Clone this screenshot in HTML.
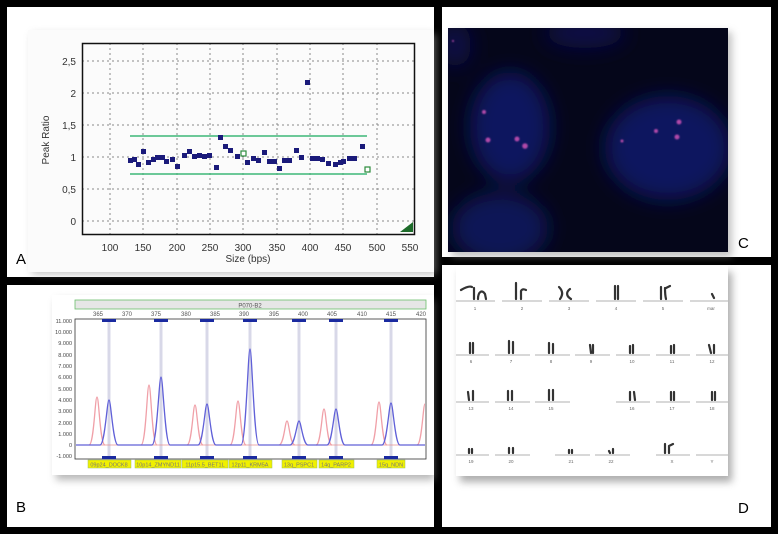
<!DOCTYPE html>
<html><head><meta charset="utf-8"><style>
html,body{margin:0;padding:0;background:#000;}
svg{display:block;font-family:"Liberation Sans",sans-serif;}
</style></head><body>
<svg width="778" height="534" viewBox="0 0 778 534" xmlns="http://www.w3.org/2000/svg">
<defs>
<filter id="bl" x="-50%" y="-50%" width="200%" height="200%"><feGaussianBlur stdDeviation="10"/></filter>
<filter id="sh" x="-10%" y="-10%" width="130%" height="130%"><feGaussianBlur stdDeviation="4"/></filter>
<filter id="b1"><feGaussianBlur stdDeviation="0.8"/></filter>
</defs>
<rect width="778" height="534" fill="#000"/>
<rect x="7" y="7" width="427" height="270" fill="#fff"/>
<rect x="7" y="285" width="427" height="242" fill="#fff"/>
<rect x="442" y="7" width="329" height="250" fill="#fff"/>
<rect x="442" y="265" width="329" height="262" fill="#fff"/>

<!-- Panel A -->
<rect x="32" y="34" width="404" height="240" fill="#999" filter="url(#sh)" opacity="0.6"/>
<rect x="28" y="30" width="406" height="242" fill="#fbfbfb"/>
<g stroke="#888" stroke-width="1" stroke-dasharray="2,3">
<line x1="82" y1="61" x2="415" y2="61"/><line x1="82" y1="93" x2="415" y2="93"/><line x1="82" y1="125" x2="415" y2="125"/><line x1="82" y1="157" x2="415" y2="157"/><line x1="82" y1="189" x2="415" y2="189"/><line x1="82" y1="221" x2="415" y2="221"/>
<line x1="110" y1="43" x2="110" y2="235"/><line x1="143" y1="43" x2="143" y2="235"/><line x1="177" y1="43" x2="177" y2="235"/><line x1="210" y1="43" x2="210" y2="235"/><line x1="243" y1="43" x2="243" y2="235"/><line x1="277" y1="43" x2="277" y2="235"/><line x1="310" y1="43" x2="310" y2="235"/><line x1="343" y1="43" x2="343" y2="235"/><line x1="377" y1="43" x2="377" y2="235"/>
</g>
<rect x="82.5" y="43.5" width="332" height="191" fill="none" stroke="#111" stroke-width="1.5"/>
<line x1="130" y1="136" x2="367" y2="136" stroke="#3cb878" stroke-width="1.5"/>
<line x1="130" y1="174" x2="367" y2="174" stroke="#3cb878" stroke-width="1.5"/>
<g fill="#1a1a7a">
<rect x="128" y="158" width="5" height="5"/><rect x="132" y="157" width="5" height="5"/><rect x="136" y="162" width="5" height="5"/><rect x="141" y="149" width="5" height="5"/><rect x="146" y="160" width="5" height="5"/><rect x="151" y="157" width="5" height="5"/><rect x="155" y="155" width="5" height="5"/><rect x="160" y="155" width="5" height="5"/><rect x="164" y="159" width="5" height="5"/><rect x="170" y="157" width="5" height="5"/><rect x="175" y="164" width="5" height="5"/><rect x="182" y="153" width="5" height="5"/><rect x="187" y="149" width="5" height="5"/><rect x="192" y="154" width="5" height="5"/><rect x="197" y="153" width="5" height="5"/><rect x="202" y="154" width="5" height="5"/><rect x="207" y="153" width="5" height="5"/><rect x="214" y="165" width="5" height="5"/><rect x="218" y="135" width="5" height="5"/><rect x="223" y="144" width="5" height="5"/><rect x="228" y="148" width="5" height="5"/><rect x="235" y="154" width="5" height="5"/><rect x="245" y="160" width="5" height="5"/><rect x="251" y="156" width="5" height="5"/><rect x="256" y="158" width="5" height="5"/><rect x="262" y="150" width="5" height="5"/><rect x="267" y="159" width="5" height="5"/><rect x="272" y="159" width="5" height="5"/><rect x="277" y="166" width="5" height="5"/><rect x="282" y="158" width="5" height="5"/><rect x="287" y="158" width="5" height="5"/><rect x="294" y="148" width="5" height="5"/><rect x="299" y="155" width="5" height="5"/><rect x="305" y="80" width="5" height="5"/><rect x="310" y="156" width="5" height="5"/><rect x="315" y="156" width="5" height="5"/><rect x="320" y="157" width="5" height="5"/><rect x="326" y="161" width="5" height="5"/><rect x="333" y="162" width="5" height="5"/><rect x="338" y="160" width="5" height="5"/><rect x="341" y="159" width="5" height="5"/><rect x="347" y="156" width="5" height="5"/><rect x="352" y="156" width="5" height="5"/><rect x="360" y="144" width="5" height="5"/>
</g>
<rect x="241" y="151" width="5" height="5" fill="#fff" stroke="#2a8a3a" stroke-width="1.2"/>
<rect x="365" y="167" width="5" height="5" fill="#fff" stroke="#2a8a3a" stroke-width="1.2"/>
<polygon points="400,232 413,232 413,222" fill="#1d6b2a"/>
<g font-size="10" fill="#333" text-anchor="end">
<text x="76" y="65">2,5</text><text x="76" y="97">2</text><text x="76" y="129">1,5</text><text x="76" y="161">1</text><text x="76" y="193">0,5</text><text x="76" y="225">0</text>
</g>
<g font-size="10" fill="#333" text-anchor="middle">
<text x="110" y="251">100</text><text x="143" y="251">150</text><text x="177" y="251">200</text><text x="210" y="251">250</text><text x="243" y="251">300</text><text x="277" y="251">350</text><text x="310" y="251">400</text><text x="343" y="251">450</text><text x="377" y="251">500</text><text x="410" y="251">550</text>
<text x="248" y="262">Size (bps)</text>
</g>
<text x="49" y="140" font-size="10" fill="#333" text-anchor="middle" transform="rotate(-90 49 140)">Peak Ratio</text>
<text x="16" y="264" font-size="15" fill="#000">A</text>

<!-- Panel B -->
<rect x="56" y="300" width="378" height="180" fill="#888" filter="url(#sh)" opacity="0.6"/>
<rect x="52" y="295" width="382" height="180" fill="#fff"/>
<rect x="75" y="300" width="351" height="9" fill="#e6e6e6" stroke="#6bbf6b" stroke-width="0.8"/>
<text x="250" y="307.5" font-size="6" fill="#555" text-anchor="middle">P070-B2</text>
<g font-size="6" fill="#555" text-anchor="middle">
<text x="98" y="316">365</text><text x="127" y="316">370</text><text x="156" y="316">375</text><text x="186" y="316">380</text><text x="215" y="316">385</text><text x="244" y="316">390</text><text x="274" y="316">395</text><text x="303" y="316">400</text><text x="332" y="316">405</text><text x="362" y="316">410</text><text x="391" y="316">415</text><text x="421" y="316">420</text>
</g>
<rect x="75" y="319" width="351" height="140" fill="#fff" stroke="#333" stroke-width="0.8"/>
<g font-size="5.5" fill="#444" text-anchor="end">
<text x="72" y="323">11.000</text><text x="72" y="334">10.000</text><text x="72" y="345">9.000</text><text x="72" y="357">8.000</text><text x="72" y="368">7.000</text><text x="72" y="379">6.000</text><text x="72" y="391">5.000</text><text x="72" y="402">4.000</text><text x="72" y="413">3.000</text><text x="72" y="425">2.000</text><text x="72" y="436">1.000</text><text x="72" y="447">0</text><text x="72" y="458">-1.000</text>
</g>
<g stroke="#d8d8e8" stroke-width="3">
<line x1="109" y1="320" x2="109" y2="458"/><line x1="161" y1="320" x2="161" y2="458"/><line x1="207" y1="320" x2="207" y2="458"/><line x1="250" y1="320" x2="250" y2="458"/><line x1="299" y1="320" x2="299" y2="458"/><line x1="336" y1="320" x2="336" y2="458"/><line x1="391" y1="320" x2="391" y2="458"/>
</g>
<line x1="76" y1="445" x2="425" y2="445" stroke="#e89090" stroke-width="0.7"/>
<g fill="none" stroke="#f0a0a8" stroke-width="1.3">
<path d="M89,445 C94,445 95,397 97,397 C99,397 100,445 105,445"/>
<path d="M141,445 C146,445 147,385 149,385 C151,385 152,445 157,445"/>
<path d="M187,445 C192,445 193,405 195,405 C197,405 198,445 203,445"/>
<path d="M230,445 C235,445 236,401 238,401 C240,401 241,445 246,445"/>
<path d="M279,445 C284,445 285,421 287,421 C289,421 290,445 295,445"/>
<path d="M316,445 C321,445 322,409 324,409 C326,409 327,445 332,445"/>
<path d="M371,445 C376,445 377,402 379,402 C381,402 382,445 387,445"/>
<path d="M417,445 C422,445 423,404 425,404"/>
</g>
<g fill="none" stroke="#6060d8" stroke-width="1.3">
<path d="M76,445 L100,445 C105,445 107,400 109,400 C111,400 113,445 118,445 L152,445 C157,445 159,377 161,377 C163,377 165,445 170,445 L198,445 C203,445 205,404 207,404 C209,404 211,445 216,445 L241,445 C246,445 248,349 250,349 C252,349 254,445 259,445 L290,445 C295,445 297,421 299,421 C301,421 303,445 308,445 L327,445 C332,445 334,409 336,409 C338,409 340,445 345,445 L382,445 C387,445 389,403 391,403 C393,403 395,445 400,445 L425,445"/>
</g>
<g fill="#1a2aa0">
<rect x="102" y="319" width="14" height="3"/><rect x="154" y="319" width="14" height="3"/><rect x="200" y="319" width="14" height="3"/><rect x="243" y="319" width="14" height="3"/><rect x="292" y="319" width="14" height="3"/><rect x="329" y="319" width="14" height="3"/><rect x="384" y="319" width="14" height="3"/>
<rect x="102" y="456" width="14" height="3"/><rect x="154" y="456" width="14" height="3"/><rect x="200" y="456" width="14" height="3"/><rect x="243" y="456" width="14" height="3"/><rect x="292" y="456" width="14" height="3"/><rect x="329" y="456" width="14" height="3"/><rect x="384" y="456" width="14" height="3"/>
</g>
<g fill="#f0f000" stroke="#9ac060" stroke-width="0.5">
<rect x="88" y="460" width="43" height="8"/><rect x="135" y="460" width="46" height="8"/><rect x="182" y="460" width="46" height="8"/><rect x="229" y="460" width="43" height="8"/><rect x="282" y="460" width="35" height="8"/><rect x="319" y="460" width="35" height="8"/><rect x="377" y="460" width="28" height="8"/>
</g>
<g font-size="5.5" fill="#777" text-anchor="middle">
<text x="109" y="466.5">09p24_DOCK8</text><text x="158" y="466.5">10p14_ZMYND11</text><text x="205" y="466.5">11p15.5_BET1L</text><text x="250" y="466.5">12p11_KRM5A</text><text x="299" y="466.5">13q_PSPC1</text><text x="336" y="466.5">14q_PARP2</text><text x="391" y="466.5">15q_NDN</text>
</g>
<text x="16" y="512" font-size="15" fill="#000">B</text>

<!-- Panel C -->
<rect x="452" y="32" width="280" height="225" fill="#888" filter="url(#sh)" opacity="0.5"/>
<svg x="448" y="28" width="280" height="224" viewBox="448 28 280 224">
<rect x="448" y="28" width="280" height="224" fill="#05061a"/>
<g filter="url(#bl)">
<ellipse cx="510" cy="127" rx="40" ry="55" fill="#10155e"/>
<ellipse cx="668" cy="148" rx="63" ry="52" fill="#10155e"/>
<ellipse cx="500" cy="228" rx="48" ry="35" fill="#0e1356"/>
<ellipse cx="585" cy="33" rx="40" ry="15" fill="#0c1046"/>
<ellipse cx="455" cy="45" rx="16" ry="22" fill="#0c1046"/>
</g>
<g fill="#b048a8" filter="url(#b1)">
<circle cx="484" cy="112" r="2"/><circle cx="488" cy="140" r="2.5"/><circle cx="517" cy="139" r="2.5"/><circle cx="525" cy="146" r="2.8"/><circle cx="656" cy="131" r="2"/><circle cx="679" cy="122" r="2.5"/><circle cx="677" cy="137" r="2.5"/><circle cx="622" cy="141" r="1.5"/><circle cx="453" cy="41" r="1"/>
</g>
</svg>
<text x="738" y="248" font-size="15" fill="#000">C</text>

<!-- Panel D -->
<rect x="460" y="272" width="272" height="210" fill="#777" filter="url(#sh)" opacity="0.6"/>
<rect x="456" y="266" width="272" height="210" fill="#fff"/>
<g stroke="#999" stroke-width="0.7">
<line x1="456" y1="301" x2="495" y2="301"/><line x1="502" y1="301" x2="542" y2="301"/><line x1="549" y1="301" x2="589" y2="301"/><line x1="596" y1="301" x2="636" y2="301"/><line x1="643" y1="301" x2="683" y2="301"/><line x1="690" y1="301" x2="728" y2="301"/>
<line x1="456" y1="355" x2="489" y2="355"/><line x1="495" y1="355" x2="530" y2="355"/><line x1="535" y1="355" x2="570" y2="355"/><line x1="575" y1="355" x2="610" y2="355"/><line x1="616" y1="355" x2="650" y2="355"/><line x1="656" y1="355" x2="690" y2="355"/><line x1="696" y1="355" x2="728" y2="355"/>
<line x1="456" y1="402" x2="489" y2="402"/><line x1="495" y1="402" x2="530" y2="402"/><line x1="535" y1="402" x2="570" y2="402"/><line x1="616" y1="402" x2="650" y2="402"/><line x1="656" y1="402" x2="690" y2="402"/><line x1="696" y1="402" x2="728" y2="402"/>
<line x1="456" y1="455" x2="489" y2="455"/><line x1="495" y1="455" x2="530" y2="455"/><line x1="555" y1="455" x2="590" y2="455"/><line x1="595" y1="455" x2="630" y2="455"/><line x1="656" y1="455" x2="690" y2="455"/><line x1="696" y1="455" x2="728" y2="455"/>
</g>
<g fill="none" stroke="#333" stroke-width="2.2" stroke-linecap="round">
<path d="M461,290 C466,287 470,286 472,287 M474,299 L474,288 M478,299 C478,292 482,289 485,294 L486,299"/>
<path d="M516,299 L516,283 M521,299 L521,291 C522,289 524,289 526,290"/>
<path d="M559,287 C563,291 563,295 560,299 M570,289 C566,292 566,296 571,299"/>
<path d="M615,286 L615,299 M618,286 L618,299"/>
<path d="M661,287 L661,299 M665,288 C665,292 665,295 666,299 M666,288 L670,286"/>
<path d="M712,294 L714,298 M470,343 L470,353 M473,343 L473,353 M509,341 L509,353 M513,342 L513,353 M549,343 L549,353 M553,344 L553,353 M590,345 L591,353 M593,345 L593,353 M630,346 L630,353 M633,345 L633,353 M671,346 L671,353 M674,345 L674,353 M709,345 L711,353 M714,345 L714,353"/>
<path d="M468,392 L469,400 M473,391 L473,400 M508,391 L508,400 M512,391 L512,400 M549,390 L549,400 M553,390 L553,400 M630,392 L630,400 M634,392 L635,400 M671,392 L671,400 M674,392 L674,400 M712,392 L712,400 M715,392 L715,400"/>
<path d="M469,449 L469,453 M472,449 L472,453 M509,448 L509,453 M513,448 L513,453 M569,450 L569,453 M572,450 L572,453 M609,451 L610,453 M613,449 L613,453 M665,444 L665,453 M669,446 L669,453 M669,446 L673,444"/>
</g>
<g font-size="4.5" fill="#666" text-anchor="middle">
<text x="475" y="310">1</text><text x="522" y="310">2</text><text x="569" y="310">3</text><text x="616" y="310">4</text><text x="663" y="310">5</text><text x="711" y="310">mar</text>
<text x="471" y="363">6</text><text x="511" y="363">7</text><text x="551" y="363">8</text><text x="591" y="363">9</text><text x="632" y="363">10</text><text x="672" y="363">11</text><text x="712" y="363">12</text>
<text x="471" y="410">13</text><text x="511" y="410">14</text><text x="551" y="410">15</text><text x="632" y="410">16</text><text x="672" y="410">17</text><text x="712" y="410">18</text>
<text x="471" y="463">19</text><text x="511" y="463">20</text><text x="571" y="463">21</text><text x="611" y="463">22</text><text x="672" y="463">X</text><text x="712" y="463">Y</text>
</g>
<text x="738" y="513" font-size="15" fill="#000">D</text>
</svg>
</body></html>
